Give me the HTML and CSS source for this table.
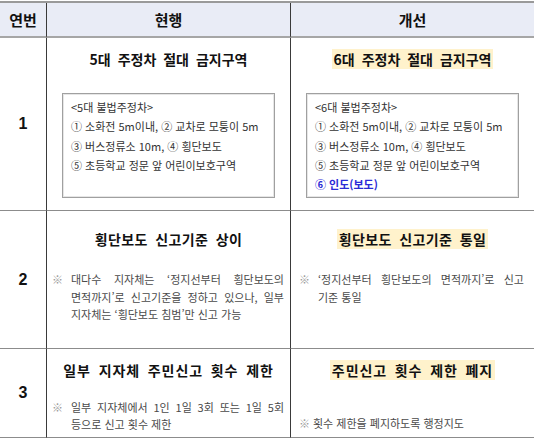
FILE: index.html
```html
<!DOCTYPE html>
<html lang="ko">
<head>
<meta charset="utf-8">
<link rel="stylesheet" href="styles.css">
</head>
<body>
<div class="table">
  <div class="hd c-no">연번</div>
  <div class="hd c-mid">현행</div>
  <div class="hd c-last">개선</div>

  <div class="num r1 c-no">1</div>
  <div class="cell r1 c-mid">
    <div class="title t1">5대 주정차 절대 금지구역</div>
    <div class="box">
      <div class="bl">&lt;5대 불법주정차&gt;</div>
      <div class="bl">① 소화전 5m이내, ② 교차로 모퉁이 5m</div>
      <div class="bl">③ 버스정류소 10m, ④ 횡단보도</div>
      <div class="bl">⑤ 초등학교 정문 앞 어린이보호구역</div>
    </div>
  </div>
  <div class="cell r1 c-last">
    <div class="title t1"><span class="hl">6대 주정차 절대 금지구역</span></div>
    <div class="box">
      <div class="bl">&lt;6대 불법주정차&gt;</div>
      <div class="bl">① 소화전 5m이내, ② 교차로 모퉁이 5m</div>
      <div class="bl">③ 버스정류소 10m, ④ 횡단보도</div>
      <div class="bl">⑤ 초등학교 정문 앞 어린이보호구역</div>
      <div class="bl blue">⑥ 인도(보도)</div>
    </div>
  </div>

  <div class="num r2 c-no">2</div>
  <div class="cell r2 c-mid">
    <div class="title t2">횡단보도 신고기준 상이</div>
    <div class="note n2">
      <span class="mark">※</span>
      <div class="nt">
        <div class="ln just">대다수 지자체는 ‘정지선부터 횡단보도의</div>
        <div class="ln just">면적까지’로 신고기준을 정하고 있으나, 일부</div>
        <div class="ln">지자체는 ‘횡단보도 침범’만 신고 가능</div>
      </div>
    </div>
  </div>
  <div class="cell r2 c-last">
    <div class="title t2"><span class="hl">횡단보도 신고기준 통일</span></div>
    <div class="note n2">
      <span class="mark">※</span>
      <div class="nt">
        <div class="ln just">‘정지선부터 횡단보도의 면적까지’로 신고</div>
        <div class="ln">기준 통일</div>
      </div>
    </div>
  </div>

  <div class="num r3 c-no">3</div>
  <div class="cell r3 c-mid">
    <div class="title t3">일부 지자체 주민신고 횟수 제한</div>
    <div class="note n3">
      <span class="mark">※</span>
      <div class="nt">
        <div class="ln just">일부 지자체에서 1인 1일 3회 또는 1일 5회</div>
        <div class="ln">등으로 신고 횟수 제한</div>
      </div>
    </div>
  </div>
  <div class="cell r3 c-last">
    <div class="title t3"><span class="hl">주민신고 횟수 제한 폐지</span></div>
    <div class="note n3b">
      <span class="mark">※</span>
      <div class="nt">
        <div class="ln">횟수 제한을 폐지하도록 행정지도</div>
      </div>
    </div>
  </div>
</div>
</body>
</html>
```

FILE: styles.css
```css
html, body {
  margin: 0;
  padding: 0;
  background: #ffffff;
}
body {
  font-family: "Noto Sans CJK KR", "Noto Sans", sans-serif;
  color: #222;
}
.table {
  margin-top: 1px;
  display: grid;
  grid-template-columns: 47px 244px 243px;
  grid-template-rows: 35px 173px 138px 89px;
  border-top: 2px solid #9a9a9a;
}
.c-no {
  border-right: 1px solid #3a3a3a;
}
.c-mid {
  border-right: 1px solid #3a3a3a;
}
.hd {
  background: #e9ecf6;
  border-bottom: 2px solid #a6a6a6;
  display: flex;
  align-items: center;
  justify-content: center;
  font-size: 15px;
  font-weight: 700;
  color: #111;
}
.num {
  display: flex;
  align-items: center;
  justify-content: center;
  font-family: "Liberation Sans", Arial, sans-serif;
  font-size: 16px;
  font-weight: 700;
  color: #111;
  border-bottom: 1px solid #8c8c8c;
}
.cell {
  border-bottom: 1px solid #8c8c8c;
  display: flex;
  flex-direction: column;
}
.title {
  text-align: center;
  font-size: 14px;
  font-weight: 700;
  line-height: 20px;
  color: #111;
  word-spacing: 3px;
}
.t1 { padding-top: 11px; }
.t2 { padding-top: 18px; letter-spacing: 0.4px; }
.t3 { padding-top: 11px; letter-spacing: 0.9px; }
.hl {
  background: #fff2cc;
  padding: 0 2px;
}
.box {
  margin: 24px 15px 0 15px;
  height: 105px;
  box-sizing: border-box;
  border: 1px solid #a0a0a0;
  box-shadow: inset 0 0 0 1px #e6e6e6;
  padding: 4px 0 0 8px;
  font-size: 11px;
  line-height: 19.3px;
  color: #333;
}
.blue {
  color: #2b2bd6;
  font-weight: 700;
}
.note {
  display: flex;
  font-size: 11px;
  color: #4a4a4a;
  line-height: 17.5px;
}
.mark {
  color: #999;
  width: 19px;
  flex: none;
}
.nt {
  flex: 1;
}
.ln.just {
  text-align: justify;
  text-align-last: justify;
}
.c-mid .note {
  padding: 0 6px 0 5px;
}
.c-last .note {
  padding: 0 10px 0 8px;
}
.n2 { margin-top: 22px; }
.n3 { margin-top: 19px; line-height: 17px; }
.n3b { margin-top: 35px; }
.n3b .mark { width: 14px; }
```
